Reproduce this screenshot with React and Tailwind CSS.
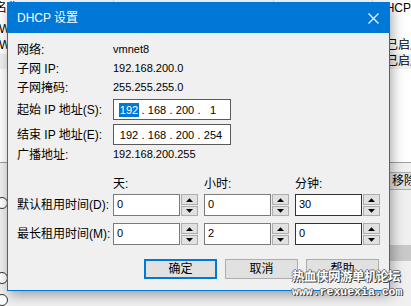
import React from "react";

function Spin() {
  return (
    <div className="flex flex-col w-[17px] h-[22px] gap-px">
      <div className="h-[11px] border border-[#adadad] bg-[#e1e1e1] flex items-center justify-center">
        <svg width="7" height="4" viewBox="0 0 7 4"><path d="M0 4 L3.5 0.2 L7 4Z" fill="#000" /></svg>
      </div>
      <div className="h-[10px] border border-[#adadad] bg-[#e1e1e1] flex items-center justify-center">
        <svg width="7" height="4" viewBox="0 0 7 4"><path d="M0 0 L3.5 3.8 L7 0Z" fill="#000" /></svg>
      </div>
    </div>
  );
}

function NumField({ value, dark }) {
  return (
    <div className="flex w-[85px] gap-px">
      <div
        className={`w-[67px] h-[22px] bg-white border ${dark ? "border-[#333]" : "border-[#7a7a7a]"} pl-[3px] text-[11px] leading-[18px]`}
      >
        {value}
      </div>
      <Spin />
    </div>
  );
}

function IpField({ parts, selectFirst }) {
  return (
    <div className="w-[118px] h-[21px] bg-white border border-[#5a5a5a] flex items-center pl-[3px] text-[11px] leading-[14px]">
      {parts.map((p, i) => (
        <React.Fragment key={i}>
          {i > 0 && <span className="w-[4px] text-center">.</span>}
          <span className="w-[24px] flex justify-center">
            <span className={i === 0 && selectFirst ? "bg-[#0078d7] text-white px-[1px]" : ""}>{p}</span>
          </span>
        </React.Fragment>
      ))}
    </div>
  );
}

function InfoRow({ label, value }) {
  return (
    <div className="flex items-center h-[19px]">
      <div className="w-[96px] text-[12px]">{label}</div>
      <div className="text-[11px]">{value}</div>
    </div>
  );
}

function Btn({ children, primary }) {
  return (
    <div
      className={`w-[73px] h-[20px] bg-[#e1e1e1] flex items-center justify-center text-[12px] ${
        primary ? "border-2 border-[#0078d7]" : "border border-[#adadad]"
      }`}
    >
      {children}
    </div>
  );
}

export default function App() {
  return (
    <div className="relative w-[411px] h-[306px] overflow-hidden bg-[#f0f0f0] font-['Liberation_Sans','Noto_Sans_CJK_SC',sans-serif] text-[12px] text-black">
      {/* background window */}
      <div className="flex flex-col h-full">
        <div className="h-[173px] bg-white border-b border-[#a0a0a0] flex flex-col">
          <div className="h-[17px] flex leading-[17px] shrink-0">
            <div className="w-[115px] border-r border-[#e5e5e5] pl-0">
              <span className="ml-[-5px] inline-block">名称</span>
            </div>
            <div className="w-[161px] border-r border-[#e5e5e5]" />
            <div className="w-[100px] border-r border-[#e5e5e5]" />
            <div className="flex-1 pl-[4px]">DHCP</div>
          </div>
          <div className="h-[4px]" />
          <div className="h-[16px] flex justify-between leading-[16px]">
            <span className="ml-[-1px]">W</span>
          </div>
          <div className="h-[17px] flex justify-between leading-[17px]">
            <span className="ml-[-1px]">W</span>
            <span className="w-[25px] overflow-hidden whitespace-nowrap">已启用</span>
          </div>
          <div className="h-[15px] flex justify-end leading-[15px] bg-[#f0f0f0]">
            <span className="w-[25px] overflow-hidden whitespace-nowrap">已启用</span>
          </div>
        </div>
        <div className="flex flex-col flex-1">
          <div className="flex justify-end mt-[9px]">
            <div className="w-[23px] h-[18px] border border-r-0 border-[#adadad] bg-[#e1e1e1] leading-[16px] pl-[3px] overflow-hidden whitespace-nowrap">
              移除
            </div>
          </div>
          <div className="mt-[7px] flex">
            <div className="ml-[-4px] w-[12px] h-[12px] rounded-full border border-[#333] bg-white" />
          </div>
          <div className="mt-[36px] flex justify-end">
            <div className="w-[21px] h-[16px] bg-[#c9c9c9]" />
          </div>
          <div className="mt-[11px] flex items-start">
            <div className="ml-[-4px] w-[12px] h-[12px] rounded-full border border-[#333] bg-white" />
            <div className="ml-[35px] mt-[0px] whitespace-nowrap">使用本地 DHCP 服务将 IP 地址分配给虚拟机(D)</div>
          </div>
          <div className="mt-[4px] flex">
            <div className="ml-[-4px] w-[12px] h-[12px] rounded-full border border-[#333] bg-white" />
          </div>
        </div>
      </div>

      {/* dialog */}
      <div className="absolute left-[7px] top-[2px] w-[383px] h-[289px] border border-[#0078d7] bg-[#f0f0f0] flex flex-col shadow-[2px_4px_12px_rgba(0,0,0,0.35)]">
        <div className="h-[30px] bg-[#0078d7] flex items-center justify-between pl-[9px] pr-[10px] text-white shrink-0">
          <span className="text-[12px]">DHCP 设置</span>
          <svg width="11" height="11" viewBox="0 0 11 11">
            <path d="M0.5 0.5 L10.5 10.5 M10.5 0.5 L0.5 10.5" stroke="#fff" strokeWidth="1.1" />
          </svg>
        </div>
        <div className="flex flex-col pl-[9px] pr-[9px] pt-[7px]">
          <InfoRow label="网络:" value="vmnet8" />
          <InfoRow label="子网 IP:" value="192.168.200.0" />
          <InfoRow label="子网掩码:" value="255.255.255.0" />
          <div className="flex items-center mt-[2px]">
            <div className="w-[96px]">起始 IP 地址(S):</div>
            <IpField parts={["192", "168", "200", "1"]} selectFirst />
          </div>
          <div className="flex items-center mt-[4px]">
            <div className="w-[96px]">结束 IP 地址(E):</div>
            <IpField parts={["192", "168", "200", "254"]} />
          </div>
          <InfoRow label="广播地址:" value="192.168.200.255" />
          <div className="flex items-center h-[16px] mt-[12px] pl-[96px] gap-[6px]">
            <div className="w-[85px]">天:</div>
            <div className="w-[85px]">小时:</div>
            <div className="w-[85px]">分钟:</div>
          </div>
          <div className="flex items-center mt-[2px]">
            <div className="w-[96px] whitespace-nowrap">默认租用时间(D):</div>
            <div className="flex gap-[6px]">
              <NumField value="0" />
              <NumField value="0" />
              <NumField value="30" dark />
            </div>
          </div>
          <div className="flex items-center mt-[7px]">
            <div className="w-[96px] whitespace-nowrap">最长租用时间(M):</div>
            <div className="flex gap-[6px]">
              <NumField value="0" />
              <NumField value="2" />
              <NumField value="0" dark />
            </div>
          </div>
          <div className="flex justify-end gap-[8px] mt-[14px] pr-[1px]">
            <Btn primary>确定</Btn>
            <Btn>取消</Btn>
            <Btn>帮助</Btn>
          </div>
        </div>
      </div>

      {/* watermark */}
      <div className="absolute left-[292px] top-[271px] flex flex-col items-start text-white font-bold leading-none [text-shadow:1px_1px_0_#444,-1px_0_0_#777,0_-1px_0_#777,1px_0_0_#555]">
        <span className="text-[12.5px] tracking-[-0.5px]">热血侠网游单机论坛</span>
        <span className="mt-[2px] text-[11.5px] font-['Liberation_Mono',monospace]">www.rexuexia.com</span>
      </div>
    </div>
  );
}
